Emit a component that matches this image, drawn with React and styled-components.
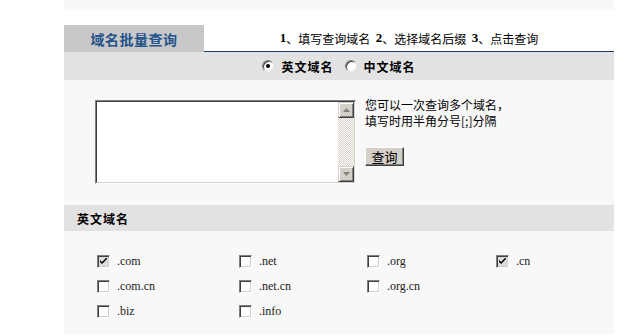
import React from 'react'
import styled, { createGlobalStyle } from 'styled-components'

const Global = createGlobalStyle`
  html, body {
    margin: 0;
    padding: 0;
    background: #fff;
  }
  body {
    font-family: "Noto Sans CJK SC", "DejaVu Sans", sans-serif;
    font-size: 12px;
    color: #000;
  }
`

const Panel = styled.div`
  margin-left: 64px;
  width: 550px;
`

const TopBand = styled.div`
  height: 10px;
  background: #f8f8f8;
  margin-bottom: 15px;
`

const TabRow = styled.div`
  display: flex;
  height: 27px;
`

const Tab = styled.div`
  width: 140px;
  background: #c8c8c8;
  color: #24528a;
  font-weight: bold;
  font-size: 14px;
  display: flex;
  align-items: center;
  justify-content: center;
  letter-spacing: 0.5px;
`

const Steps = styled.div`
  flex: 1;
  box-sizing: border-box;
  border-bottom: 1px solid #173d6e;
  display: flex;
  align-items: center;
  justify-content: center;
  font-size: 12px;
  white-space: pre;
  b { font-family: "Liberation Serif", serif; font-size: 13px; }
`

const RadioRow = styled.div`
  height: 28px;
  background: #e2e2e2;
  display: flex;
  align-items: center;
  justify-content: center;
  gap: 11px;
`

const RadioItem = styled.label`
  display: flex;
  align-items: center;
  gap: 7px;
  font-weight: bold;
  letter-spacing: 1px;
`

const RadioDot = styled.span`
  position: relative;
  width: 10px;
  height: 10px;
  border-radius: 50%;
  border: 1px solid;
  border-color: #808080 #e8e8e8 #e8e8e8 #808080;
  background: #fff;
  box-shadow: inset 1px 1px #404040;
  &::after {
    content: '';
    display: ${p => (p.$on ? 'block' : 'none')};
    position: absolute;
    left: 3px;
    top: 3px;
    width: 4px;
    height: 4px;
    border-radius: 50%;
    background: #000;
  }
`

const Body = styled.div`
  background: #f8f8f8;
  padding: 20px 0 21px 31px;
  display: flex;
  gap: 9px;
`

const Field = styled.div`
  width: 261px;
  height: 84px;
  box-sizing: border-box;
  border: 1px solid;
  border-color: #808080 #fff #fff #808080;
`

const FieldInner = styled.div`
  height: 100%;
  box-sizing: border-box;
  border: 1px solid;
  border-color: #404040 #d4d0c8 #d4d0c8 #404040;
  display: flex;
  background: #fff;
`

const Area = styled.textarea`
  flex: 1;
  border: 0;
  outline: none;
  resize: none;
  margin: 0;
  padding: 2px;
  background: #fff;
  overflow: hidden;
`

const Scroll = styled.div`
  width: 16px;
  display: flex;
  flex-direction: column;
  background-image: repeating-conic-gradient(#d4d0c8 0 25%, #fff 0 50%);
  background-size: 2px 2px;
`

const ArrowBtn = styled.div`
  width: 16px;
  height: 16px;
  box-sizing: border-box;
  background: #d4d0c8;
  border: 1px solid;
  border-color: #d4d0c8 #404040 #404040 #d4d0c8;
  box-shadow: inset 1px 1px #fff, inset -1px -1px #808080;
  display: flex;
  align-items: center;
  justify-content: center;
`

const Track = styled.div`
  flex: 1;
`

const Side = styled.div`
  display: flex;
  flex-direction: column;
  margin-top: -3px;
`

const Hint = styled.p`
  margin: 0;
  line-height: 16px;
  font-size: 12px;
`

const Button = styled.button`
  margin-top: 18px;
  align-self: flex-start;
  width: 39px;
  height: 19px;
  padding: 0;
  background: #d4d0c8;
  border: 1px solid;
  border-color: #fff #404040 #404040 #fff;
  box-shadow: inset -1px -1px #808080;
  font-family: "Noto Sans CJK SC", sans-serif;
  font-size: 13px;
  line-height: 15px;
  color: #000;
`

const SectionHead = styled.div`
  height: 26px;
  background: #e2e2e2;
  display: flex;
  align-items: center;
  padding-left: 13px;
  font-weight: bold;
  letter-spacing: 1px;
`

const Grid = styled.div`
  background: #f8f8f8;
  padding: 18px 0 10px 33px;
  display: grid;
  grid-template-columns: 142px 128px 129px 1fr;
  grid-auto-rows: 25px;
  align-items: center;
`

const Check = styled.label`
  display: flex;
  align-items: center;
  gap: 7px;
  font-family: "Liberation Serif", serif;
  font-size: 12px;
  color: #222;
`

const Box = styled.span`
  width: 11px;
  height: 11px;
  border: 1px solid;
  border-color: #808080 #fff #fff #808080;
  box-shadow: inset 1px 1px #404040, inset -1px -1px #d4d0c8;
  background: ${p => (p.$on ? '#dcdcdc' : '#fff')};
  display: flex;
  align-items: center;
  justify-content: center;
`

const Tick = () => (
  <svg width="7" height="7" viewBox="0 0 7 7">
    <path d="M0 2 L0 4 L2 6 L7 1 L7 -1 L2 4 Z" fill="#000" />
  </svg>
)

const Up = ({ color = '#808080' }) => (
  <svg width="7" height="4" viewBox="0 0 7 4">
    <path d="M3.5 0 L7 4 L0 4 Z" fill={color} />
  </svg>
)

const Down = ({ color = '#808080' }) => (
  <svg width="7" height="4" viewBox="0 0 7 4">
    <path d="M0 0 L7 0 L3.5 4 Z" fill={color} />
  </svg>
)

const suffixes = [
  { name: '.com', on: true },
  { name: '.net' },
  { name: '.org' },
  { name: '.cn', on: true },
  { name: '.com.cn' },
  { name: '.net.cn' },
  { name: '.org.cn' },
  { name: '' },
  { name: '.biz' },
  { name: '.info' },
]

export default function App() {
  return (
    <Panel>
      <Global />
      <TopBand />
      <TabRow>
        <Tab>域名批量查询</Tab>
        <Steps>
          <b>1</b>、填写查询域名  <b>2</b>、选择域名后缀  <b>3</b>、点击查询
        </Steps>
      </TabRow>
      <RadioRow>
        <RadioItem>
          <RadioDot $on />
          英文域名
        </RadioItem>
        <RadioItem>
          <RadioDot />
          中文域名
        </RadioItem>
      </RadioRow>
      <Body>
        <Field>
          <FieldInner>
            <Area />
            <Scroll>
              <ArrowBtn><Up /></ArrowBtn>
              <Track />
              <ArrowBtn><Down /></ArrowBtn>
            </Scroll>
          </FieldInner>
        </Field>
        <Side>
          <Hint>您可以一次查询多个域名，</Hint>
          <Hint>填写时用半角分号[;]分隔</Hint>
          <Button>查询</Button>
        </Side>
      </Body>
      <SectionHead>英文域名</SectionHead>
      <Grid>
        {suffixes.map((s, i) =>
          s.name ? (
            <Check key={i}>
              <Box $on={s.on}>{s.on && <Tick />}</Box>
              {s.name}
            </Check>
          ) : (
            <span key={i} />
          )
        )}
      </Grid>
    </Panel>
  )
}
